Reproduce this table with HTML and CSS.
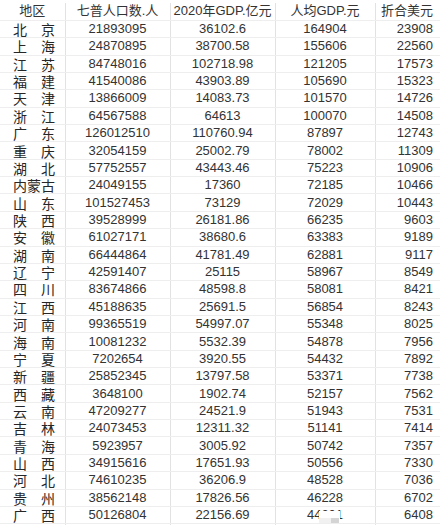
FILE: index.html
```html
<!DOCTYPE html>
<html lang="zh">
<head>
<meta charset="utf-8">
<title>各省人均GDP</title>
<link rel="stylesheet" href="styles.css">
</head>
<body>
<table class="sheet">
  <colgroup>
    <col class="c-region"><col class="c-pop"><col class="c-gdp"><col class="c-per"><col class="c-usd">
  </colgroup>
  <thead>
    <tr><th class="region-h">地区</th><th>七普人口数.人</th><th>2020年GDP.亿元</th><th>人均GDP.元</th><th class="usd">折合美元</th></tr>
  </thead>
  <tbody>
    <tr><td><div class="name"><span>北</span><span>京</span></div></td><td>21893095</td><td>36102.6</td><td>164904</td><td class="usd">23908</td></tr>
    <tr><td><div class="name"><span>上</span><span>海</span></div></td><td>24870895</td><td>38700.58</td><td>155606</td><td class="usd">22560</td></tr>
    <tr><td><div class="name"><span>江</span><span>苏</span></div></td><td>84748016</td><td>102718.98</td><td>121205</td><td class="usd">17573</td></tr>
    <tr><td><div class="name"><span>福</span><span>建</span></div></td><td>41540086</td><td>43903.89</td><td>105690</td><td class="usd">15323</td></tr>
    <tr><td><div class="name"><span>天</span><span>津</span></div></td><td>13866009</td><td>14083.73</td><td>101570</td><td class="usd">14726</td></tr>
    <tr><td><div class="name"><span>浙</span><span>江</span></div></td><td>64567588</td><td>64613</td><td>100070</td><td class="usd">14508</td></tr>
    <tr><td><div class="name"><span>广</span><span>东</span></div></td><td>126012510</td><td>110760.94</td><td>87897</td><td class="usd">12743</td></tr>
    <tr><td><div class="name"><span>重</span><span>庆</span></div></td><td>32054159</td><td>25002.79</td><td>78002</td><td class="usd">11309</td></tr>
    <tr><td><div class="name"><span>湖</span><span>北</span></div></td><td>57752557</td><td>43443.46</td><td>75223</td><td class="usd">10906</td></tr>
    <tr><td><div class="name"><span>内</span><span>蒙</span><span>古</span></div></td><td>24049155</td><td>17360</td><td>72185</td><td class="usd">10466</td></tr>
    <tr><td><div class="name"><span>山</span><span>东</span></div></td><td>101527453</td><td>73129</td><td>72029</td><td class="usd">10443</td></tr>
    <tr><td><div class="name"><span>陕</span><span>西</span></div></td><td>39528999</td><td>26181.86</td><td>66235</td><td class="usd">9603</td></tr>
    <tr><td><div class="name"><span>安</span><span>徽</span></div></td><td>61027171</td><td>38680.6</td><td>63383</td><td class="usd">9189</td></tr>
    <tr><td><div class="name"><span>湖</span><span>南</span></div></td><td>66444864</td><td>41781.49</td><td>62881</td><td class="usd">9117</td></tr>
    <tr><td><div class="name"><span>辽</span><span>宁</span></div></td><td>42591407</td><td>25115</td><td>58967</td><td class="usd">8549</td></tr>
    <tr><td><div class="name"><span>四</span><span>川</span></div></td><td>83674866</td><td>48598.8</td><td>58081</td><td class="usd">8421</td></tr>
    <tr><td><div class="name"><span>江</span><span>西</span></div></td><td>45188635</td><td>25691.5</td><td>56854</td><td class="usd">8243</td></tr>
    <tr><td><div class="name"><span>河</span><span>南</span></div></td><td>99365519</td><td>54997.07</td><td>55348</td><td class="usd">8025</td></tr>
    <tr><td><div class="name"><span>海</span><span>南</span></div></td><td>10081232</td><td>5532.39</td><td>54878</td><td class="usd">7956</td></tr>
    <tr><td><div class="name"><span>宁</span><span>夏</span></div></td><td>7202654</td><td>3920.55</td><td>54432</td><td class="usd">7892</td></tr>
    <tr><td><div class="name"><span>新</span><span>疆</span></div></td><td>25852345</td><td>13797.58</td><td>53371</td><td class="usd">7738</td></tr>
    <tr><td><div class="name"><span>西</span><span>藏</span></div></td><td>3648100</td><td>1902.74</td><td>52157</td><td class="usd">7562</td></tr>
    <tr><td><div class="name"><span>云</span><span>南</span></div></td><td>47209277</td><td>24521.9</td><td>51943</td><td class="usd">7531</td></tr>
    <tr><td><div class="name"><span>吉</span><span>林</span></div></td><td>24073453</td><td>12311.32</td><td>51141</td><td class="usd">7414</td></tr>
    <tr><td><div class="name"><span>青</span><span>海</span></div></td><td>5923957</td><td>3005.92</td><td>50742</td><td class="usd">7357</td></tr>
    <tr><td><div class="name"><span>山</span><span>西</span></div></td><td>34915616</td><td>17651.93</td><td>50556</td><td class="usd">7330</td></tr>
    <tr><td><div class="name"><span>河</span><span>北</span></div></td><td>74610235</td><td>36206.9</td><td>48528</td><td class="usd">7036</td></tr>
    <tr><td><div class="name"><span>贵</span><span>州</span></div></td><td>38562148</td><td>17826.56</td><td>46228</td><td class="usd">6702</td></tr>
    <tr><td><div class="name"><span>广</span><span>西</span></div></td><td>50126804</td><td>22156.69</td><td class="masked">44201<span class="smudge"><i class="s1"></i><i class="s2"></i></span></td><td class="usd">6408</td></tr>
    <tr><td><div class="name"><span>黑</span><span>龙</span><span>江</span></div></td><td>31850088</td><td>13698.5</td><td>43009</td><td class="usd">6236</td></tr>
  </tbody>
</table>
</body>
</html>
```

FILE: styles.css
```css
html, body {
  margin: 0;
  padding: 0;
  background: #ffffff;
  overflow: hidden;
}

body {
  width: 440px;
  height: 525px;
  padding-top: 3px;
  box-sizing: border-box;
  font-family: "Liberation Sans", "Noto Sans CJK SC", sans-serif;
  color: #333333;
}

.sheet {
  width: 440px;
  table-layout: fixed;
  border-collapse: collapse;
  font-size: 13px;
}

.c-region { width: 65px; }
.c-pop { width: 105px; }
.c-gdp { width: 105px; }
.c-per { width: 100px; }
.c-usd { width: 65px; }

.sheet th,
.sheet td {
  box-sizing: border-box;
  padding: 0;
  height: 17.36px;
  line-height: 14px;
  text-align: center;
  white-space: nowrap;
  font-weight: normal;
  border-top: 1px solid #eeeeee;
  border-bottom: 1px solid #eeeeee;
  border-left: 1px solid #e2e2e2;
  border-right: 1px solid #e2e2e2;
  overflow: hidden;
}

.sheet tr > :first-child { border-left: none; }
.sheet tr > :last-child { border-right: none; }
.sheet thead th { border-top: none; }

.sheet th {
  color: #333333;
}

.sheet .usd {
  text-align: right;
  padding-right: 7px;
}

.name {
  width: 42px;
  margin-left: 13px;
  display: flex;
  justify-content: space-between;
  font-family: "Noto Sans CJK SC", sans-serif;
  font-size: 14px;
  line-height: 14px;
  color: #262626;
}

.masked {
  position: relative;
}

.smudge {
  position: absolute;
  left: 43px;
  top: 4px;
  width: 21px;
  height: 16px;
  background: #ffffff;
}

.smudge i {
  position: absolute;
  bottom: 0;
  height: 9px;
}

.smudge .s1 {
  left: 0;
  width: 12px;
  background: #f1f1f1;
}

.smudge .s2 {
  left: 12px;
  width: 8px;
  background: #d4d4d4;
}
```
